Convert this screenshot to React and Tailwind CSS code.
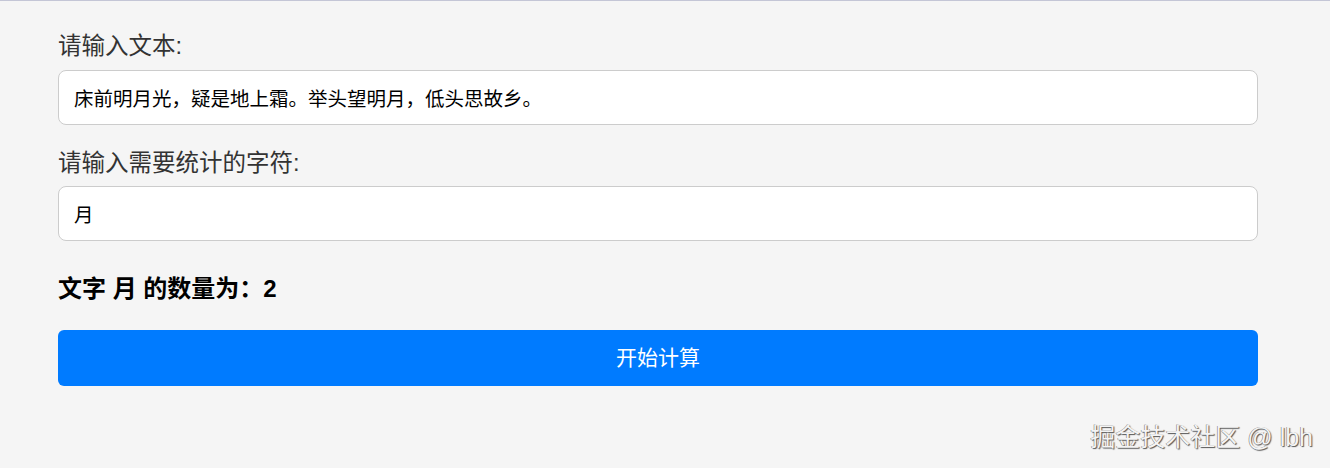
import React, { useState } from 'react';

export default function App() {
  const [text, setText] = useState('床前明月光，疑是地上霜。举头望明月，低头思故乡。');
  const [char, setChar] = useState('月');
  const [count, setCount] = useState(2);

  // 统计字符出现次数
  const handleCount = () => {
    if (!char) return setCount(0);
    setCount(text.split(char).length - 1);
  };

  return (
    <div className="relative min-h-[468px] bg-[#f5f5f5] border-t border-[#c4c6d6] font-['Liberation_Sans','Noto_Sans_CJK_SC',sans-serif]">
      <div className="w-[1200px] ml-[58px] pt-[30px] flex flex-col">
        <label className="text-[23.5px] leading-[30px] text-[#333] mb-[9px]">请输入文本:</label>
        <input
          type="text"
          value={text}
          onChange={(e) => setText(e.target.value)}
          className="h-[55px] px-[15px] text-[19.5px] text-black bg-white border border-[#cccccc] rounded-lg outline-none"
        />

        <label className="text-[23.5px] leading-[30px] text-[#333] mt-[23px] mb-2">请输入需要统计的字符:</label>
        <input
          type="text"
          value={char}
          onChange={(e) => setChar(e.target.value)}
          className="h-[55px] px-[15px] text-[19.5px] text-black bg-white border border-[#cccccc] rounded-lg outline-none"
        />

        <p className="mt-[33px] text-[24px] leading-[30px] font-bold text-black">
          文字 {char} 的数量为：{count}
        </p>

        <button
          onClick={handleCount}
          className="mt-[26px] h-[56px] bg-[#007bff] text-white text-[21px] rounded-md"
        >
          开始计算
        </button>
      </div>

      <div className="absolute right-[17px] top-[419px] text-[25px] leading-[34px] text-[#f4f4f4] [text-shadow:1px_1px_1px_#555,-0.5px_-0.5px_0_#777]">
        掘金技术社区 @ lbh
      </div>
    </div>
  );
}
